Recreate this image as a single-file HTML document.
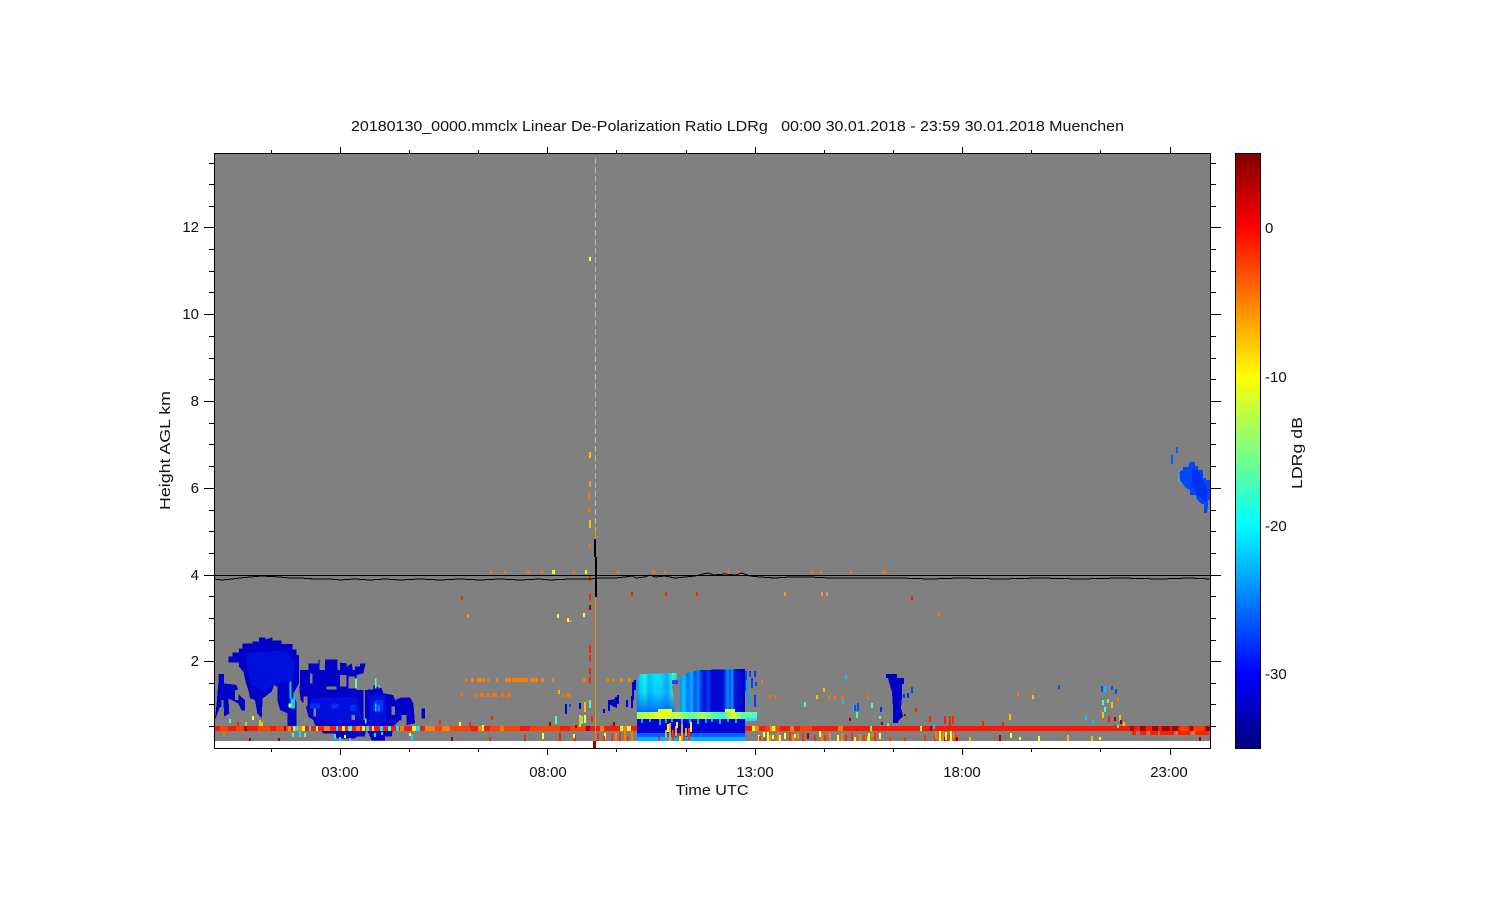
<!DOCTYPE html>
<html><head><meta charset="utf-8"><style>
html,body{margin:0;padding:0;background:#fff}
svg{display:block}
text{font-family:"Liberation Sans",sans-serif;font-size:15px;fill:#111}
</style></head><body>
<svg width="1500" height="900" viewBox="0 0 1500 900" xmlns="http://www.w3.org/2000/svg" shape-rendering="crispEdges">
<defs>
<linearGradient id="jet" x1="0" y1="1" x2="0" y2="0">
<stop offset="0" stop-color="#00007f"/><stop offset=".125" stop-color="#0000ff"/><stop offset=".375" stop-color="#00ffff"/><stop offset=".625" stop-color="#ffff00"/><stop offset=".875" stop-color="#ff0000"/><stop offset="1" stop-color="#7f0000"/>
</linearGradient>
<linearGradient id="c1" x1="0" x2="1" y1="0" y2="0">
<stop offset="0" stop-color="#00a0ff"/><stop offset=".08" stop-color="#00e0ff"/><stop offset=".2" stop-color="#20f8d8"/><stop offset=".3" stop-color="#00c0ff"/><stop offset=".45" stop-color="#00e8ff"/><stop offset=".6" stop-color="#18d8f0"/><stop offset=".75" stop-color="#00b0ff"/><stop offset=".9" stop-color="#40f8b8"/><stop offset="1" stop-color="#20d0e0"/>
</linearGradient>
<linearGradient id="fadeblue" x1="0" x2="0" y1="0" y2="1">
<stop offset="0" stop-color="#0060ff" stop-opacity="0"/><stop offset=".5" stop-color="#0060ff" stop-opacity=".15"/><stop offset="1" stop-color="#0050ff" stop-opacity=".8"/>
</linearGradient>
<linearGradient id="c2" x1="0" x2="1" y1="0" y2="0">
<stop offset="0" stop-color="#0090ff"/><stop offset=".06" stop-color="#00c8ff"/><stop offset=".12" stop-color="#0070ff"/><stop offset=".18" stop-color="#00b0ff"/><stop offset=".23" stop-color="#0050f0"/><stop offset=".28" stop-color="#0088ff"/><stop offset=".33" stop-color="#0030e8"/><stop offset=".38" stop-color="#0010d8"/><stop offset=".44" stop-color="#0040f8"/><stop offset=".48" stop-color="#0008d0"/><stop offset=".66" stop-color="#0008d0"/><stop offset=".7" stop-color="#0050f8"/><stop offset=".74" stop-color="#0090ff"/><stop offset=".77" stop-color="#0040f0"/><stop offset=".8" stop-color="#00a0ff"/><stop offset=".84" stop-color="#0018d8"/><stop offset="1" stop-color="#0000c8"/>
</linearGradient>
<linearGradient id="c3" x1="0" x2="1" y1="0" y2="0">
<stop offset="0" stop-color="#a0ff50"/><stop offset=".12" stop-color="#c8ff30"/><stop offset=".2" stop-color="#f0ff10"/><stop offset=".35" stop-color="#b0ff50"/><stop offset=".45" stop-color="#60ffa0"/><stop offset=".55" stop-color="#b0ff50"/><stop offset=".65" stop-color="#50ffb0"/><stop offset=".72" stop-color="#40f0c0"/><stop offset=".8" stop-color="#e0ff20"/><stop offset=".88" stop-color="#60ffa0"/><stop offset="1" stop-color="#50ffb0"/>
</linearGradient>
</defs>

<!-- plot background -->
<rect x="214" y="153" width="996" height="595" fill="#fff"/>
<rect x="214" y="154" width="996" height="587" fill="#808080"/>

<!-- clouds, left (zoom coordinates) -->
<g transform="translate(200 620) scale(.33333)">
<g fill="#0000c8">
<polygon points="85,128 85,110 97,110 97,97 117,97 117,85 127,85 127,70 157,70 157,65 177,65 177,52 197,52 197,58 217,52 217,62 245,62 245,72 277,72 277,88 290,88 290,105 297,105 297,190 280,220 290,250 290,318 262,318 262,280 240,270 232,240 232,200 222,195 215,215 188,235 185,295 172,280 165,240 150,235 145,210 138,190 130,155 117,140 117,128"/>
<polygon points="45,295 50,250 55,190 55,162 72,162 72,190 110,195 117,225 135,240 135,272 125,272 115,250 95,240 85,235 88,280 72,290 72,265 60,260 47,295"/>
<polygon points="300,150 325,150 325,130 355,130 355,118 358,118 358,150 375,150 375,118 412,118 412,150 420,150 420,128 440,130 440,140 455,130 458,150 465,150 465,140 480,140 480,130 497,130 490,160 470,165 470,210 490,210 490,300 500,300 495,350 470,350 465,355 410,355 405,340 370,340 345,315 340,300 325,290 318,260 302,240 298,210 300,190"/>
<polygon points="495,210 520,208 520,195 545,205 550,220 580,225 585,240 605,232 630,232 640,250 645,310 620,315 600,300 580,320 575,350 555,350 555,362 515,362 510,350 500,330 495,300"/>
<polygon points="665,265 675,265 675,295 665,295"/>
</g>
<g fill="#0010dc">
<polygon points="135,100 260,90 285,130 280,180 230,190 190,215 150,190"/>
<polygon points="330,235 470,230 485,300 400,315 345,290"/>
<polygon points="505,225 555,225 560,300 510,320"/>
</g>
<g fill="#0030f0">
<rect x="330" y="250" width="30" height="15"/><rect x="395" y="250" width="20" height="15"/><rect x="450" y="255" width="20" height="18"/><rect x="520" y="240" width="30" height="35"/>
</g>
<g fill="#808080">
<rect x="420" y="165" width="20" height="35"/><rect x="358" y="130" width="14" height="15"/><rect x="445" y="170" width="20" height="35"/><rect x="330" y="160" width="8" height="30"/>
<rect x="310" y="230" width="12" height="30"/><rect x="380" y="200" width="30" height="8"/><rect x="340" y="265" width="8" height="25"/><rect x="575" y="260" width="10" height="25"/><rect x="605" y="285" width="15" height="30"/><rect x="455" y="285" width="10" height="15"/>
<rect x="65" y="240" width="5" height="25"/><rect x="105" y="210" width="10" height="30"/><rect x="225" y="240" width="5" height="20"/>
</g>
<g fill="#00d0ff">
<rect x="268" y="185" width="6" height="50"/><rect x="272" y="235" width="8" height="30"/><rect x="280" y="220" width="5" height="45"/><rect x="525" y="250" width="5" height="25"/><rect x="535" y="255" width="4" height="20"/>
</g>
<rect x="266" y="250" width="8" height="12" fill="#c0ff40"/>
<rect x="465" y="175" width="6" height="30" fill="#60ffa0"/>
<rect x="525" y="175" width="4" height="30" fill="#60ffa0"/>
<rect x="535" y="195" width="4" height="10" fill="#60ffa0"/>
<rect x="495" y="295" width="4" height="15" fill="#60ffa0"/>
</g>

<!-- mid cloud -->
<path fill="none" stroke-width="2" stroke="#0000d0" d="M566 704v10M580 703v6M604 709v4M609 703v8M616 697v10M618 695v9M627 700v7M632 696v12M635 680v10M633 682v18"/>
<polygon fill="#0000c8" points="608,700 612,700 617,698 617,708 608,704"/>
<polygon fill="url(#c1)" points="637,680 640,674 677,673 677,678 672,686 675,712 637,712"/>
<polygon fill="url(#fadeblue)" points="637,680 640,674 677,673 677,678 672,686 675,712 637,712"/>
<polygon fill="url(#c2)" points="680,677 690,672 700,670 745,669 745,712 680,712"/>
<rect x="677" y="672" width="3" height="40" fill="#808080"/>
<rect x="672" y="680" width="6" height="4" fill="#0050ff"/>
<rect x="637" y="712" width="120" height="7" fill="url(#c3)"/>
<rect x="658" y="709" width="14" height="3" fill="#d8ff28"/><rect x="725" y="709" width="10" height="3" fill="#d8ff28"/>
<rect x="637" y="719" width="108" height="16" fill="#0000d8"/>
<path fill="none" stroke-width="2" stroke="#00b0ff" d="M642 719v4M650 719v3M660 719v6M666 719v4M672 719v3M682 719v6M690 719v4M698 719v5M706 719v4M712 719v3M720 719v5M728 719v3M736 719v4"/>
<rect x="745" y="718" width="12" height="3" fill="#40d0ff"/>
<rect x="637" y="733" width="108" height="4" fill="#0060ff"/>
<rect x="637" y="737" width="108" height="4" fill="#00b0ff"/>
<path fill="none" stroke-width="2" stroke="#ffa000" d="M670 723v18M676 726v10M682 724v16M686 728v8M666 730v8"/>
<path fill="none" stroke-width="2" stroke="#ff3000" d="M673 730v10M679 733v8M684 735v6M689 728v12M659 737v4"/>
<path fill="none" stroke-width="2" stroke="#f0ff20" d="M668 724v8M677 722v6M691 722v10M680 736v5"/>
<path fill="none" stroke-width="2" stroke="#0040ff" d="M746 671v20M750 671v6M755 671v6M752 678v10M756 682v4M755 695v12"/>
<path fill="none" stroke-width="2" stroke="#00a0ff" d="M747 680v16M749 695v12"/>

<!-- 16h & right clouds -->
<polygon fill="#0000c8" points="886,674 897,674 897,678 904,678 904,684 902,684 902,696 901,708 903,716 899,720 898,723 893,723 893,708 892,692 889,682 888,678 886,678"/>
<path fill="none" stroke-width="2" stroke="#0030f0" d="M912 687v6M904 694v4M908 693v5M881 707v5"/>
<polygon fill="#0048ff" points="1190,462 1195,462 1195,466 1198,466 1198,470 1203,470 1203,478 1206,478 1206,480 1210,480 1210,500 1208,500 1208,506 1207,513 1204,513 1204,504 1202,504 1197,500 1196,495 1190,495 1190,490 1186,488 1183,484 1180,480 1178,472 1183,470 1183,467 1188,467"/>
<polygon fill="#0030ee" points="1192,468 1198,470 1204,482 1208,492 1206,502 1198,496 1192,484"/>
<path fill="none" stroke-width="2" stroke="#0060ff" d="M1177 447v6M1172 455v9"/>
<path fill="none" stroke-width="1" stroke="#40c0ff" d="M1179 470v12"/>

<!-- red band -->
<rect x="214" y="726" width="423" height="5" fill="#ff1800"/>
<rect x="745" y="726" width="465" height="5" fill="#ff1800"/>
<g fill="none" stroke-width="5">
<path stroke="#ff4000" d="M220 728.500h8M236 728.500h10M258 728.500h12M276 728.500h12M430 728.500h40M490 728.500h30M530 728.500h30M570 728.500h15M765 728.500h15M800 728.500h12M1180 728.500h8M1194 728.500h10"/>
<path stroke="#ff8000" d="M288 728.500h3M298 728.500h6M324 728.500h6M356 728.500h4M400 728.500h4M425 728.500h10M442 728.500h8M478 728.500h6M500 728.500h4M600 728.500h4M620 728.500h10M755 728.500h4M770 728.500h6M790 728.500h4M838 728.500h5"/>
<path stroke="#e8ff20" d="M293 728.500h2M302 728.500h3M316 728.500h2M342 728.500h3M362 728.500h3M372 728.500h2M412 728.500h4M620 728.500h3M627 728.500h4M752 728.500h3M772 728.500h3M920 728.500h2"/>
<path stroke="#00e8ff" d="M295 728.500h3M309 728.500h2M336 728.500h2M366 728.500h3M380 728.500h3M396 728.500h3M416 728.500h4"/>
<path stroke="#50ffa0" d="M348 728.500h4M388 728.500h3M870 728.500h2"/>
<path stroke="#a00000" d="M244 728.500h3M284 728.500h2M586 728.500h4M930 728.500h2M1130 728.500h4M1140 728.500h6M1152 728.500h6M1162 728.500h8M1172 728.500h6M1190 728.500h3M1206 728.500h4"/>
</g>
<g fill="none" stroke-width="4">
<path stroke="#ff2000" d="M1132 733h4M1140 733h6M1150 733h8M1160 733h14M1178 733h12M1195 733h14"/>
<path stroke="#ff7000" d="M1148 733h2M1176 733h2M1192 733h3"/>
</g>

<!-- orange rows -->
<path fill="none" stroke="#ff8000" stroke-width="4" d="M465 680h2M471 680h3M477 680h5M483 680h2M487 680h2M496 680h2M505 680h6M512 680h16M530 680h8M541 680h3M552 680h2M583 680h3M607 680h2M612 680h2M620 680h3M628 680h3"/>
<path fill="none" stroke="#ff7000" stroke-width="4" d="M461 695h2M475 695h3M480 695h4M487 695h2M492 695h5M501 695h3M507 695h4M562 695h2M566 695h5"/>
<path fill="none" stroke="#ff7000" stroke-width="3" d="M490 572h2M504 572h2M527 572h3M541 572h2M573 572h2M585 572h3M617 572h2M652 572h3M664 572h2M727 572h3M737 572h2M811 572h2M820 572h2M850 572h2M882 572h4"/>
<rect x="552" y="570" width="3" height="4" fill="#e0ff30"/><rect x="585" y="570" width="2" height="4" fill="#e0ff30"/>

<!-- noise -->
<g fill="none" stroke-width="2">
<path stroke="#ff7000" d="M224 731v6M590 543v4M589 493v6M589 507v6M829 695v4M835 695v4M842 695v4M868 695v4M939 612v4M1018 692v4M1118 697v4M762 680v4M770 695v4M775 695v4"/>
<path stroke="#ffc000" d="M246 722v4M260 720v6M262 722v4M585 702v10M580 715v12M559 690v4M590 520v8M590 452v6M824 688v4M817 695v4M1010 714v6M1033 695v4M1103 712v6M1112 702v6M1120 715v6M1124 722v4M868 736v5M970 737v4M1092 736v5M1068 735v6"/>
<path stroke="#ff2000" d="M238 722v4M462 596v4M697 592v4M666 592v4M632 592v4M590 575v6M590 594v6M590 645v8M590 655v6M590 668v6M590 677v6M590 700v6M912 596v4M492 716v4M592 716v6M611 725v4M470 722v4M440 720v4M916 708v4M930 716v6M945 716v8M950 716v10M953 716v8M983 721v5M1003 722v4M1109 716v6M1115 725v3M490 737v4M525 735v6M560 733v8M575 735v6"/>
<path stroke="#a00000" d="M250 738v3M279 738v3M590 605v5M452 737v4M550 722v4M614 722v4M576 725v3M808 733v6M850 718v3M882 722v3M905 714v2M945 737v4M957 737v4M1000 735v6M1115 717v4M1121 720v4M1200 737v4"/>
<path stroke="#50ffa0" d="M230 719v4M293 733v4M305 733v4M556 716v8M582 716v8M590 700v8M888 723v3M1103 700v5M1108 699v4M1105 707v5M805 702v5M857 712v6M880 716v3M872 703v5M1118 725v3"/>
<path stroke="#ffff30" d="M253 716v4M345 735v3M410 733v3M460 722v4M483 725v6M543 733v6M574 734v4M605 733v6M759 735v6M764 732v5M768 732v9M773 735v4M780 735v6M785 733v6M795 734v4M820 731v6M838 735v6M855 737v4M869 733v8M880 733v6M940 731v10M946 732v8M951 731v10M1011 733v5M1020 737v3M1100 737v3M1039 736v5M585 715v8M558 614v4M568 618v4M584 613v4M590 257v4"/>
<path stroke="#00c8ff" d="M846 675v4M843 700v4M854 705v6M1093 720v4M1105 686v6M1086 715v5M934 725v4"/>
<path stroke="#0050ff" d="M855 705v6M858 703v8M1059 685v4M1102 686v6M1112 686v4M1116 689v5M912 687v5M570 704v3"/>
<path stroke="#ff9040" d="M785 592v4M822 592v4M827 592v4M468 614v4M590 481v6M570 620v2"/>
<path stroke="#ff3000" d="M760 736v5M765 738v3M790 732v9M803 733v8M815 735v6M825 735v6M846 735v6M852 732v9M864 735v6M875 733v8M890 737v4M905 737v4M925 735v6M935 735v6M948 735v6M955 733v8M598 733v8M604 736v5M612 734v7M620 733v8M628 736v5"/>
<path stroke="#ff8000" d="M770 735v6M778 732v9M793 735v6M798 733v6M822 733v8M830 732v9M842 733v8M860 734v7M872 731v6M936 731v8M943 732v9M954 733v5M616 733v8M625 731v10M632 731v10"/>
<path stroke="#00e8ff" d="M300 731v6M335 734v5M340 737v4M350 738v3M412 734v6M382 732v3M375 733v4"/>
</g>

<!-- vertical artefact -->
<path d="M595.500 158V530" stroke="#b8b8b0" stroke-width="1" stroke-dasharray="6 3" fill="none"/>
<path d="M595.500 530V741" stroke="#f09000" stroke-width="1" fill="none"/>
<rect x="593" y="741" width="3" height="7" fill="#a00000"/>
<rect x="594" y="539" width="2" height="18" fill="#000"/>
<rect x="595" y="557" width="2" height="40" fill="#000"/>

<!-- black lines -->
<line x1="214" y1="575.500" x2="1210" y2="575.500" stroke="#000" stroke-width="1"/>
<polyline fill="none" stroke="#000" stroke-width="1" points="214,579 222,580 232,579 240,578 250,577 262,576 280,577 290,578 300,578 315,579 330,579 340,580 355,579 370,580 385,579 400,580 420,579 440,580 460,579 480,580 500,579 520,580 540,579 550,580 570,579 590,579 600,578 615,578 625,577 632,576 636,578 645,577 650,575 655,577 665,576 675,578 685,577 695,576 703,574 708,573 714,575 725,574 735,575 742,573 750,576 760,577 775,578 790,577 810,577 830,578 860,578 900,578 930,579 960,578 1000,579 1040,578 1080,579 1120,578 1160,579 1190,578 1210,579"/>

<!-- axes -->
<rect x="214.500" y="153.500" width="996" height="595" fill="none" stroke="#000" stroke-width="1"/>
<path fill="none" stroke="#000" stroke-width="1" d="
M340.500 748v7M547.500 748v7M755.500 748v7M962.500 748v7M1170.500 748v7
M340.500 153v-6M547.500 153v-6M755.500 153v-6M962.500 153v-6M1170.500 153v-6
M271.500 748v4M409.500 748v4M478.500 748v4M616.500 748v4M686.500 748v4M824.500 748v4M893.500 748v4M1031.500 748v4M1100.500 748v4
M271.500 153v-3M409.500 153v-3M478.500 153v-3M616.500 153v-3M686.500 153v-3M824.500 153v-3M893.500 153v-3M1031.500 153v-3M1100.500 153v-3
M204 227.500h10M204 314.500h10M204 401.500h10M204 488.500h10M204 575.500h10M204 661.500h10
M1210 227.500h11M1210 314.500h11M1210 401.500h11M1210 488.500h11M1210 575.500h11M1210 661.500h11
M209 726.500h5M209 704.500h5M209 683.500h5M209 640.500h5M209 618.500h5M209 596.500h5M209 553.500h5M209 531.500h5M209 510.500h5M209 466.500h5M209 444.500h5M209 423.500h5M209 379.500h5M209 358.500h5M209 336.500h5M209 292.500h5M209 271.500h5M209 249.500h5M209 206.500h5M209 184.500h5M209 163.500h5
M1210 726.500h6M1210 704.500h6M1210 683.500h6M1210 640.500h6M1210 618.500h6M1210 596.500h6M1210 553.500h6M1210 531.500h6M1210 510.500h6M1210 466.500h6M1210 444.500h6M1210 423.500h6M1210 379.500h6M1210 358.500h6M1210 336.500h6M1210 292.500h6M1210 271.500h6M1210 249.500h6M1210 206.500h6M1210 184.500h6M1210 163.500h6"/>

<!-- colorbar -->
<rect x="1235" y="153" width="25" height="595" fill="url(#jet)"/>
<rect x="1235.500" y="153.500" width="25" height="595" fill="none" stroke="#000" stroke-width="1"/>

<!-- text -->
<g shape-rendering="auto">
<text x="351" y="131" textLength="773" lengthAdjust="spacingAndGlyphs" xml:space="preserve">20180130_0000.mmclx Linear De-Polarization Ratio LDRg   00:00 30.01.2018 - 23:59 30.01.2018 Muenchen</text>
<g text-anchor="middle">
<text x="340" y="777">03:00</text><text x="548" y="777">08:00</text><text x="755" y="777">13:00</text><text x="962" y="777">18:00</text><text x="1169" y="777">23:00</text>
<text x="712" y="795" textLength="73" lengthAdjust="spacingAndGlyphs">Time UTC</text>
</g>
<g text-anchor="end">
<text x="199" y="232">12</text><text x="199" y="319">10</text><text x="199" y="406">8</text><text x="199" y="493">6</text><text x="199" y="580">4</text><text x="199" y="666">2</text>
</g>
<text x="1265" y="233">0</text><text x="1265" y="382">-10</text><text x="1265" y="531">-20</text><text x="1265" y="679">-30</text>
<text transform="translate(170 510) rotate(-90)" textLength="119" lengthAdjust="spacingAndGlyphs">Height AGL km</text>
<text transform="translate(1302 489) rotate(-90)" textLength="72" lengthAdjust="spacingAndGlyphs">LDRg dB</text>
</g>
</svg>
</body></html>
